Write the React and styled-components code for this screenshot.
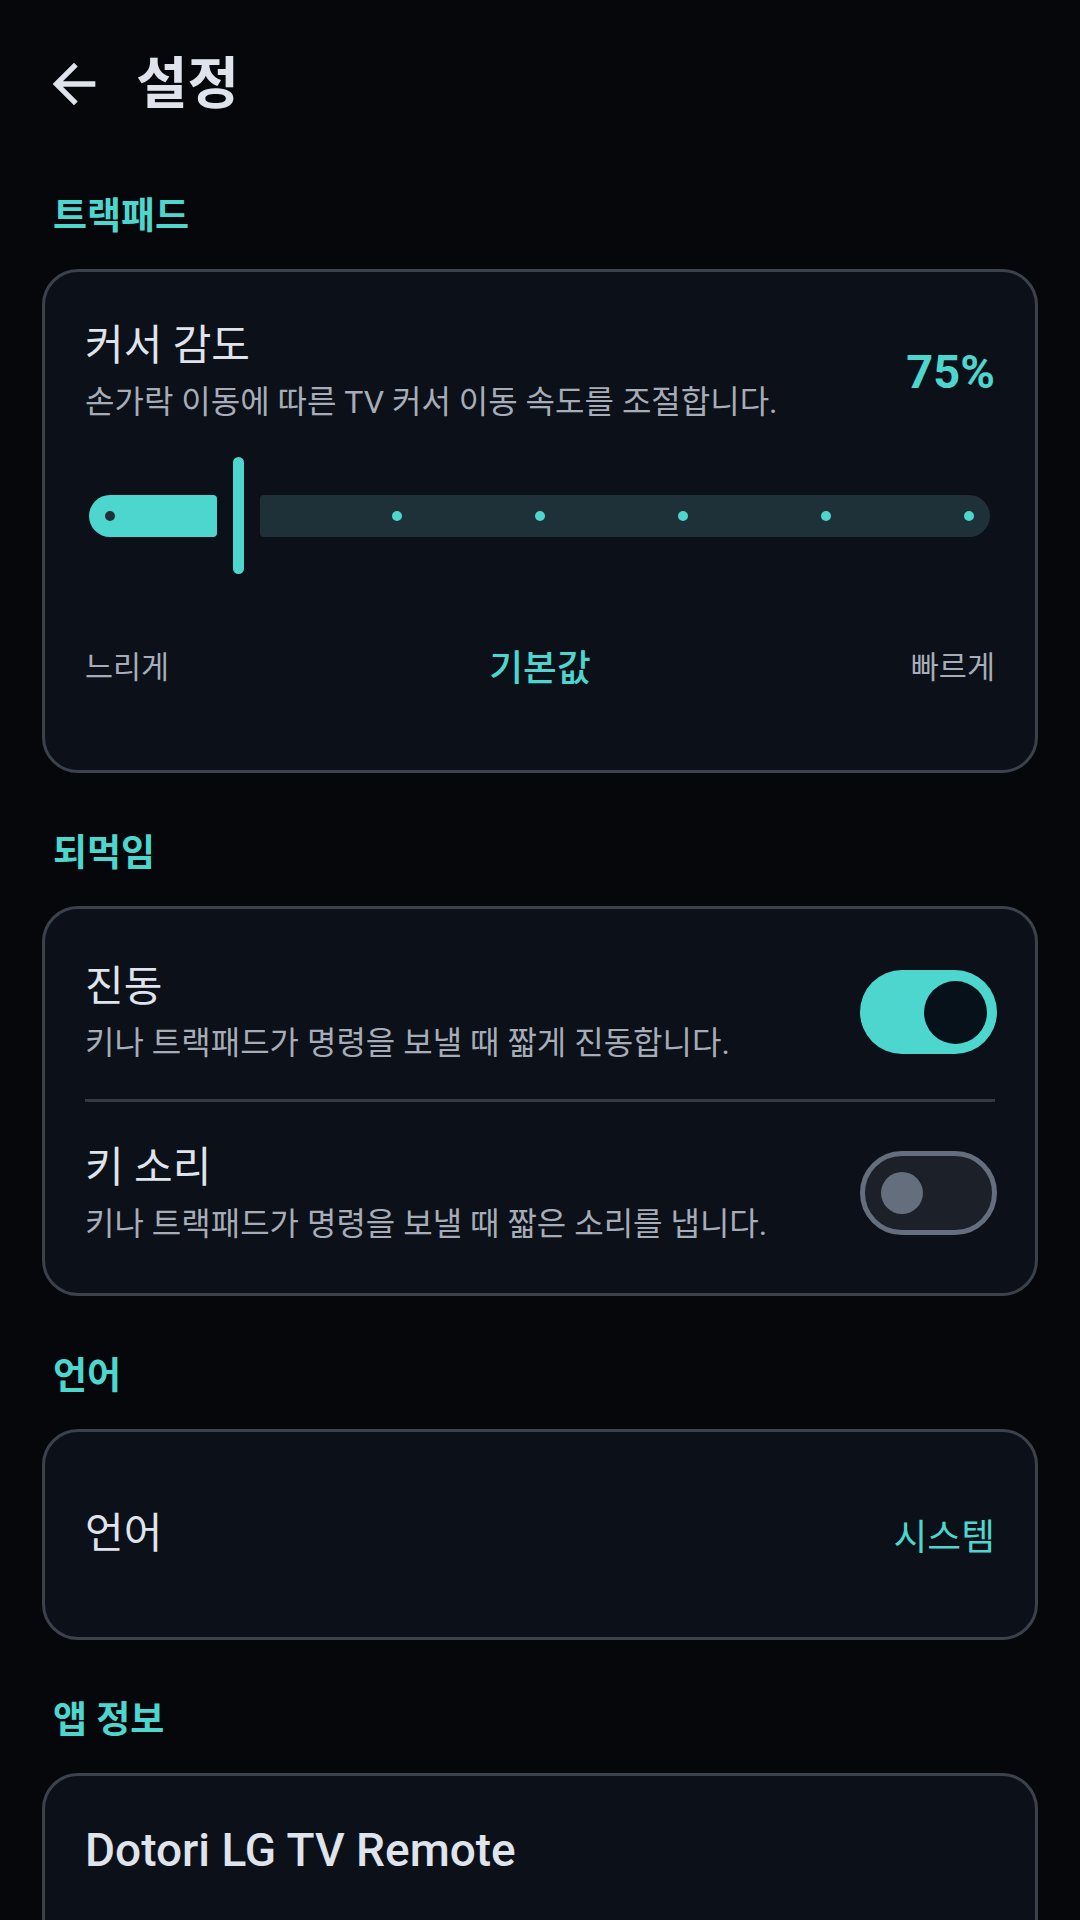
import React, { useState } from "react";
import styled, { createGlobalStyle } from "styled-components";

const TEAL = "#4dd6ce";

const GlobalStyle = createGlobalStyle`
  html, body {
    margin: 0;
    padding: 0;
    background: #05070b;
  }
  body {
    font-family: "Roboto", "Noto Sans CJK KR", sans-serif;
    color: #dfe3ec;
  }
  * {
    box-sizing: border-box;
  }
`;

const SettingsPage = () => {
  const [vibration, setVibration] = useState(true);
  const [keySound, setKeySound] = useState(false);

  return (
    <Page>
      <Header>
        <BackButton aria-label="뒤로">
          <svg width="64" height="64" viewBox="0 0 24 24" fill="currentColor">
            <path d="M20 11H7.83l5.59-5.59L12 4l-8 8 8 8 1.41-1.41L7.83 13H20v-2z" />
          </svg>
        </BackButton>
        <Title>설정</Title>
      </Header>

      <SectionLabel first>트랙패드</SectionLabel>
      <Card pad="46px 40px 83px">
        <SliderHead>
          <div>
            <ItemTitle>커서 감도</ItemTitle>
            <ItemDesc>손가락 이동에 따른 TV 커서 이동 속도를 조절합니다.</ItemDesc>
          </div>
          <Value>75%</Value>
        </SliderHead>
        <Slider>
          <ActiveTrack>
            <Tick active />
          </ActiveTrack>
          <Thumb />
          <InactiveTrack>
            <Tick />
            <Tick />
            <Tick />
            <Tick />
            <Tick />
          </InactiveTrack>
        </Slider>
        <ScaleLabels>
          <ScaleText>느리게</ScaleText>
          <DefaultText>기본값</DefaultText>
          <ScaleText>빠르게</ScaleText>
        </ScaleLabels>
      </Card>

      <SectionLabel>되먹임</SectionLabel>
      <Card pad="12px 40px 13px">
        <ToggleRow>
          <div>
            <ItemTitle>진동</ItemTitle>
            <ItemDesc>키나 트랙패드가 명령을 보낼 때 짧게 진동합니다.</ItemDesc>
          </div>
          <Switch on={vibration} onClick={() => setVibration(!vibration)}>
            <Knob on={vibration} />
          </Switch>
        </ToggleRow>
        <Divider />
        <ToggleRow>
          <div>
            <ItemTitle>키 소리</ItemTitle>
            <ItemDesc>키나 트랙패드가 명령을 보낼 때 짧은 소리를 냅니다.</ItemDesc>
          </div>
          <Switch on={keySound} onClick={() => setKeySound(!keySound)}>
            <Knob on={keySound} />
          </Switch>
        </ToggleRow>
      </Card>

      <SectionLabel>언어</SectionLabel>
      <Card pad="74px 40px 75px">
        <LangRow>
          <ItemTitle>언어</ItemTitle>
          <LangValue>시스템</LangValue>
        </LangRow>
      </Card>

      <SectionLabel>앱 정보</SectionLabel>
      <Card pad="46px 40px 120px">
        <AppName>Dotori LG TV Remote</AppName>
      </Card>
    </Page>
  );
};

export default function App() {
  return (
    <>
      <GlobalStyle />
      <SettingsPage />
    </>
  );
}

const Page = styled.div`
  width: 1080px;
  height: 1920px;
  overflow: hidden;
  padding: 0 42px;
  background: #05070b;
`;

const Header = styled.header`
  display: flex;
  align-items: center;
  gap: 30px;
  height: 168px;
`;

const BackButton = styled.button`
  display: flex;
  width: 64px;
  height: 64px;
  padding: 0;
  border: 0;
  background: none;
  color: #dfe3ec;
`;

const Title = styled.h1`
  margin: 0;
  font-size: 56px;
  font-weight: 700;
  line-height: 1;
`;

const SectionLabel = styled.h2`
  margin: ${(p) => (p.first ? "27px" : "59px")} 0 30px;
  padding: 0 11px;
  font-size: 37px;
  font-weight: 700;
  line-height: 44px;
  color: ${TEAL};
`;

const Card = styled.section`
  padding: ${(p) => p.pad};
  background: #0c1018;
  border: 3px solid #3b424b;
  border-radius: 36px;
`;

const SliderHead = styled.div`
  display: flex;
  align-items: center;
  justify-content: space-between;
`;

const ItemTitle = styled.div`
  font-size: 42px;
  line-height: 56px;
  color: #dfe3ec;
`;

const ItemDesc = styled.div`
  margin-top: 6px;
  font-size: 32px;
  line-height: 44px;
  color: #a6adb8;
`;

const Value = styled.div`
  font-size: 47px;
  font-weight: 700;
  color: ${TEAL};
`;

const Slider = styled.div`
  display: flex;
  align-items: center;
  gap: 16px;
  height: 117px;
  margin-top: 33px;
  padding: 0 5px 0 4px;
`;

const ActiveTrack = styled.div`
  display: flex;
  align-items: center;
  width: 128px;
  height: 42px;
  padding-left: 16px;
  background: ${TEAL};
  border-radius: 21px 4px 4px 21px;
`;

const InactiveTrack = styled.div`
  flex: 1;
  display: flex;
  align-items: center;
  justify-content: flex-end;
  gap: 133px;
  height: 42px;
  padding-right: 16px;
  background: #1e3138;
  border-radius: 4px 21px 21px 4px;
`;

const Tick = styled.span`
  width: 10px;
  height: 10px;
  border-radius: 50%;
  background: ${(p) => (p.active ? "#1e3138" : TEAL)};
`;

const Thumb = styled.div`
  width: 11px;
  height: 117px;
  border-radius: 6px;
  background: ${TEAL};
`;

const ScaleLabels = styled.div`
  display: flex;
  align-items: center;
  justify-content: space-between;
  height: 44px;
  margin-top: 69px;
`;

const ScaleText = styled.span`
  font-size: 30.5px;
  color: #a6adb8;
`;

const DefaultText = styled.span`
  font-size: 36.75px;
  font-weight: 500;
  color: ${TEAL};
`;

const ToggleRow = styled.div`
  display: flex;
  align-items: center;
  justify-content: space-between;
  padding: 38px 0 34px;
`;

const Divider = styled.hr`
  margin: 0;
  border: 0;
  height: 3px;
  background: #353b44;
`;

const Switch = styled.button`
  display: flex;
  align-items: center;
  justify-content: ${(p) => (p.on ? "flex-end" : "flex-start")};
  flex-shrink: 0;
  width: 137px;
  height: 84px;
  margin-right: -2px;
  padding: ${(p) => (p.on ? "0 10px" : "0 16px")};
  border: ${(p) => (p.on ? "none" : "5px solid #646e7c")};
  border-radius: 42px;
  background: ${(p) => (p.on ? TEAL : "#1b2029")};
  cursor: pointer;
`;

const Knob = styled.span`
  width: ${(p) => (p.on ? "63px" : "42px")};
  height: ${(p) => (p.on ? "63px" : "42px")};
  border-radius: 50%;
  background: ${(p) => (p.on ? "#06111a" : "#646e7c")};
`;

const LangRow = styled.div`
  display: flex;
  align-items: center;
  justify-content: space-between;
`;

const LangValue = styled.span`
  font-size: 36.75px;
  color: ${TEAL};
`;

const AppName = styled.div`
  font-size: 46px;
  font-weight: 500;
  line-height: 56px;
  color: #dfe3ec;
`;
